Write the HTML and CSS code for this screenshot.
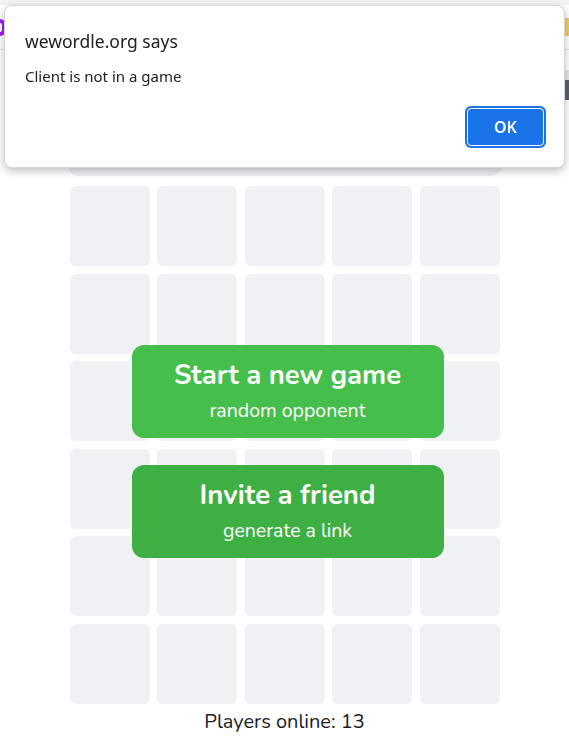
FILE: index.html
```html
<!DOCTYPE html>
<html lang="en">
<head>
  <meta charset="UTF-8">
  <title>WeWordle</title>
  <link rel="stylesheet" href="styles.css">
</head>
<body>
  <div class="topstrip"></div>
  <header class="header">
    <span class="logo"></span>
    <span class="badge"></span>
  </header>

  <div class="toolbar">
    <span class="toggle"></span>
  </div>

  <main class="board">
    <div class="status"></div>

    <div class="grid-wrap">
      <div class="grid" id="grid"></div>

      <div class="menu">
        <button class="menu-btn start">
          <span class="menu-title">Start a new game</span>
          <span class="menu-sub">random opponent</span>
        </button>
        <button class="menu-btn invite">
          <span class="menu-title">Invite a friend</span>
          <span class="menu-sub">generate a link</span>
        </button>
      </div>
    </div>

    <p class="online">Players online: 13</p>
  </main>

  <div class="dialog">
    <div class="dialog-title">wewordle.org says</div>
    <div class="dialog-text">Client is not in a game</div>
    <div class="dialog-actions">
      <button class="dialog-ok">OK</button>
    </div>
  </div>

  <script>
    // 6 rows x 5 letters
    const grid = document.getElementById("grid");
    for (let i = 0; i < 30; i++) {
      const tile = document.createElement("div");
      tile.className = "tile";
      grid.appendChild(tile);
    }
  </script>
</body>
</html>
```

FILE: styles.css
```css
body {
  margin: 0;
  background: #fff;
  font-family: "Nunito", "Lato", "Noto Sans", sans-serif;
  color: #1b1b2a;
  overflow: hidden;
}
.topstrip {
  height: 5px;
  background: #f1f2f4;
}
.header {
  height: 44px;
  display: flex;
  align-items: center;
  justify-content: space-between;
  border-bottom: 1px solid #dedfe3;
}
.logo {
  width: 12px;
  height: 17px;
  margin-left: -6px;
  border: 4px solid #a21cf0;
  border-radius: 8px;
  box-sizing: border-box;
}
.badge {
  width: 14px;
  height: 18px;
  margin-right: -8px;
  background: #f3cd5a;
  border-radius: 3px;
}
.toolbar {
  height: 50px;
  display: flex;
  justify-content: flex-end;
  align-items: flex-end;
}
.toggle {
  width: 12px;
  height: 30px;
  margin-right: -6px;
  background: linear-gradient(#e5e6ea 0 10px, #5a606e 10px);
  border-radius: 3px;
}
.board {
  width: 434px;
  margin: 0 auto;
}
.status {
  height: 66px;
  margin-top: 10px;
  background: #eff0f4;
  border-radius: 10px;
}
.grid-wrap {
  position: relative;
  margin-top: 10px;
  padding: 0 2px;
}
.grid {
  display: grid;
  grid-template-columns: repeat(5, 80px);
  gap: 7.5px;
}
.tile {
  height: 80px;
  background: #f0f1f5;
  border-radius: 6px;
}
.menu {
  position: absolute;
  left: 64px;
  top: 159px;
  display: flex;
  flex-direction: column;
  gap: 27px;
}
.menu-btn {
  width: 312px;
  height: 93px;
  border: none;
  border-radius: 12px;
  color: #fff;
  font-family: inherit;
  display: flex;
  flex-direction: column;
  align-items: center;
  justify-content: center;
  gap: 3px;
  padding: 0 0 4px;
}
.start {
  background: #45be4b;
}
.invite {
  background: #3eb043;
}
.menu-title {
  font-size: 27.5px;
  font-weight: 700;
}
.menu-sub {
  font-size: 19.5px;
}
.online {
  margin: 4px 0 0;
  text-align: center;
  font-size: 20px;
}
.dialog {
  position: fixed;
  left: 4px;
  top: 5px;
  width: 561px;
  height: 163px;
  box-sizing: border-box;
  background: #fff;
  border: 1px solid #d6d6d6;
  border-radius: 8px;
  box-shadow: 0 3px 8px rgba(0, 0, 0, 0.25);
  padding: 23px 20px 0 20px;
  font-family: "Noto Sans", "Open Sans", sans-serif;
  color: #202124;
}
.dialog-title {
  font-size: 17.5px;
}
.dialog-text {
  margin-top: 13px;
  font-size: 15px;
}
.dialog-actions {
  display: flex;
  justify-content: flex-end;
  margin-top: 22px;
}
.dialog-ok {
  width: 77px;
  height: 38px;
  background: #1a73e8;
  color: #fff;
  border: 1px solid #fff;
  border-radius: 4px;
  box-shadow: 0 0 0 2px #1a73e8;
  font-family: inherit;
  font-size: 16px;
  font-weight: 600;
}
```
